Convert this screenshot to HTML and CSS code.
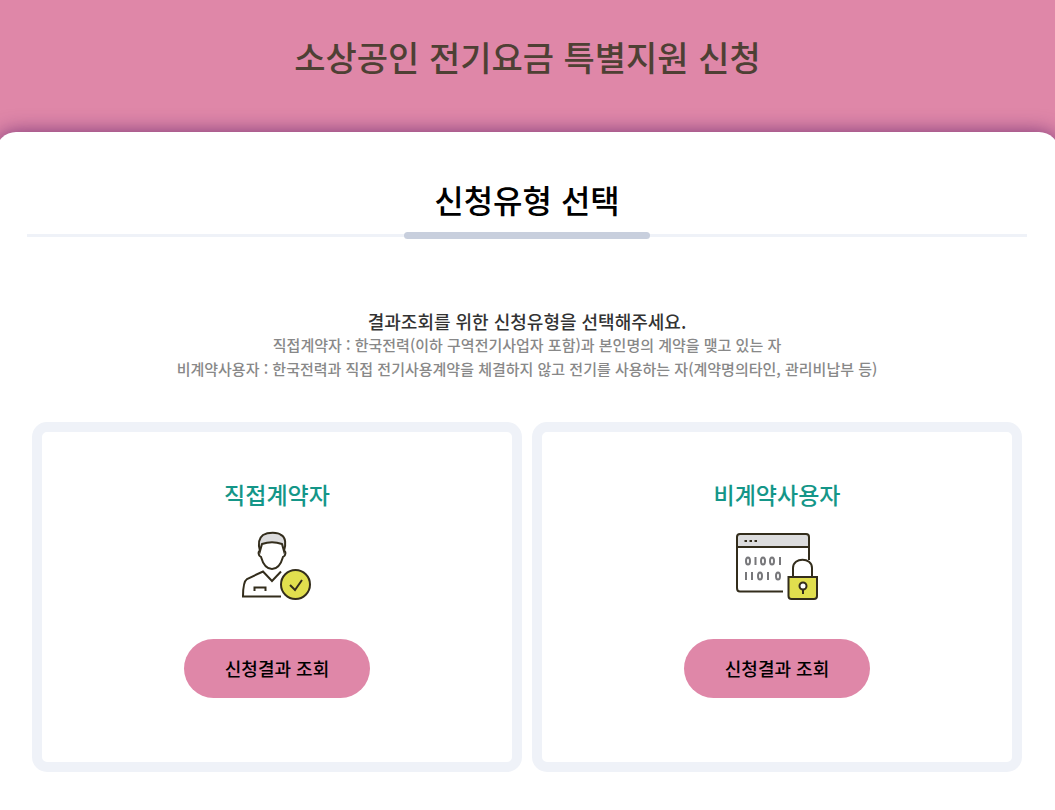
FILE: index.html
```
<!DOCTYPE html>
<html lang="ko">
<head>
    <meta charset="UTF-8">
    <meta name="viewport" content="width=device-width, initial-scale=1.0">
    <title>소상공인 전기요금 특별지원 신청</title>
    <link rel="stylesheet" href="styles.css">
</head>
<body>
    <header class="header">
        <h1>소상공인 전기요금 특별지원 신청</h1>
    </header>

    <main class="panel">
        <div class="inner">
            <h2 class="section-title">신청유형 선택</h2>

            <div class="guide">
                <p class="guide-main">결과조회를 위한 신청유형을 선택해주세요.</p>
                <p>직접계약자 : 한국전력(이하 구역전기사업자 포함)과 본인명의 계약을 맺고 있는 자</p>
                <p>비계약사용자 : 한국전력과 직접 전기사용계약을 체결하지 않고 전기를 사용하는 자(계약명의타인, 관리비납부 등)</p>
            </div>

            <div class="cards">
                <section class="card">
                    <h3>직접계약자</h3>
                    <!-- 사람 + 체크 -->
                    <svg class="icon" width="94" height="90" viewBox="0 0 94 90" fill="none" stroke="#332d1c" stroke-width="2" aria-hidden="true">
                        <path d="M30 31C28 24 29 18 33 15C38 12 48 12 51 15C56 17 56 25 54 31L52 24C46 22 38 22 32 24Z" fill="#dcdcdd"/>
                        <path d="M30 31C28 31 28 36 31 37C33 44 37 49 42 49C47 49 51 44 53 37C56 36 56 31 54 31"/>
                        <path d="M51 76.500H13C13 68 14 61 17 59L33 51.500L42 61L51 51.500"/>
                        <path d="M24.500 71V67.500H35.500V71"/>
                        <circle cx="65.500" cy="64.500" r="14.500" fill="#e1df4e"/>
                        <path d="M60 65L65 70L72 60"/>
                    </svg>
                    <button type="button" class="btn">신청결과 조회</button>
                </section>

                <section class="card">
                    <h3>비계약사용자</h3>
                    <!-- 브라우저 창 + 자물쇠 -->
                    <svg class="icon" width="104" height="90" viewBox="0 0 104 90" fill="none" stroke="#332d1c" stroke-width="2" aria-hidden="true">
                        <path d="M12 27V17Q12 14 15 14H81Q84 14 84 17V27Z" fill="#dcdcdd"/>
                        <path d="M58 71.500H15Q12 71.500 12 68V27M84 27V40"/>
                        <path d="M19.500 21H22M24.500 21H27M29.500 21H32"/>
                        <g stroke="#77777a">
                            <ellipse cx="23" cy="41" rx="2" ry="3.500"/>
                            <path d="M30.500 37V45M55 37V45M21 52V60M27 52V60M43 52V60"/>
                            <ellipse cx="38" cy="41" rx="2" ry="3.500"/>
                            <ellipse cx="47" cy="41" rx="2" ry="3.500"/>
                            <ellipse cx="35" cy="56" rx="2" ry="3.500"/>
                            <ellipse cx="53" cy="56" rx="2" ry="3.500"/>
                        </g>
                        <path d="M68 56V48C68 37 87 37 87 48V56"/>
                        <path d="M63.500 57H92V76Q92 79 89 79H66.500Q63.500 79 63.500 76Z" fill="#e1df4e"/>
                        <circle cx="78" cy="66" r="3.500" fill="#fff"/>
                        <path d="M78 69V74"/>
                    </svg>
                    <button type="button" class="btn">신청결과 조회</button>
                </section>
            </div>
        </div>
    </main>
</body>
</html>
```
FILE: styles.css
```
* {
    box-sizing: border-box;
    margin: 0;
    padding: 0;
}

body {
    font-family: "Noto Sans CJK KR", sans-serif;
    background: #fff;
    color: #000;
    overflow-x: hidden;
}

h1, h2, h3 {
    font-weight: 500;
}

.header {
    height: 152px;
    padding-top: 31px;
    background: #df87a8;
    text-align: center;
}

.header h1 {
    font-size: 34px;
    line-height: 52px;
    color: #4e4034;
}

/* 헤더 위로 올라오는 흰색 영역 */
.panel {
    position: relative;
    margin: -20px -4px 0;
    padding: 43px 31px 38px 30px;
    background: #fff;
    border-radius: 20px 20px 0 0;
    box-shadow: 0 0 20px rgba(80, 20, 100, 0.7);
}

.inner {
    max-width: 1000px;
    margin: 0 auto;
}

.section-title {
    position: relative;
    padding-bottom: 11px;
    border-bottom: 3px solid #eff2f8;
    font-size: 32px;
    line-height: 48px;
    text-align: center;
}

.section-title::after {
    content: "";
    position: absolute;
    left: 50%;
    bottom: -5px;
    width: 246px;
    height: 7px;
    margin-left: -123px;
    border-radius: 4px;
    background: #c8cfdd;
}

.guide {
    margin: 72px 0 41px;
    text-align: center;
    font-size: 15px;
    font-weight: 500;
    line-height: 24px;
    color: #888;
}

.guide .guide-main {
    font-size: 18px;
    color: #333;
}

.cards {
    display: grid;
    grid-template-columns: 1fr 1fr;
    gap: 10px;
    padding: 0 5px;
}

.card {
    display: flex;
    flex-direction: column;
    align-items: center;
    min-height: 350px;
    padding: 46px 10px;
    border: 10px solid #eff2f8;
    border-radius: 15px;
}

.card h3 {
    font-size: 23px;
    line-height: 32px;
    color: #149688;
}

.icon {
    margin: 10px 0 29px;
}

.btn {
    width: 186px;
    height: 59px;
    padding-bottom: 2px;
    border: 0;
    border-radius: 30px;
    background: #df87a8;
    color: #000;
    font-family: inherit;
    font-size: 18px;
    font-weight: 500;
    cursor: pointer;
}
```
